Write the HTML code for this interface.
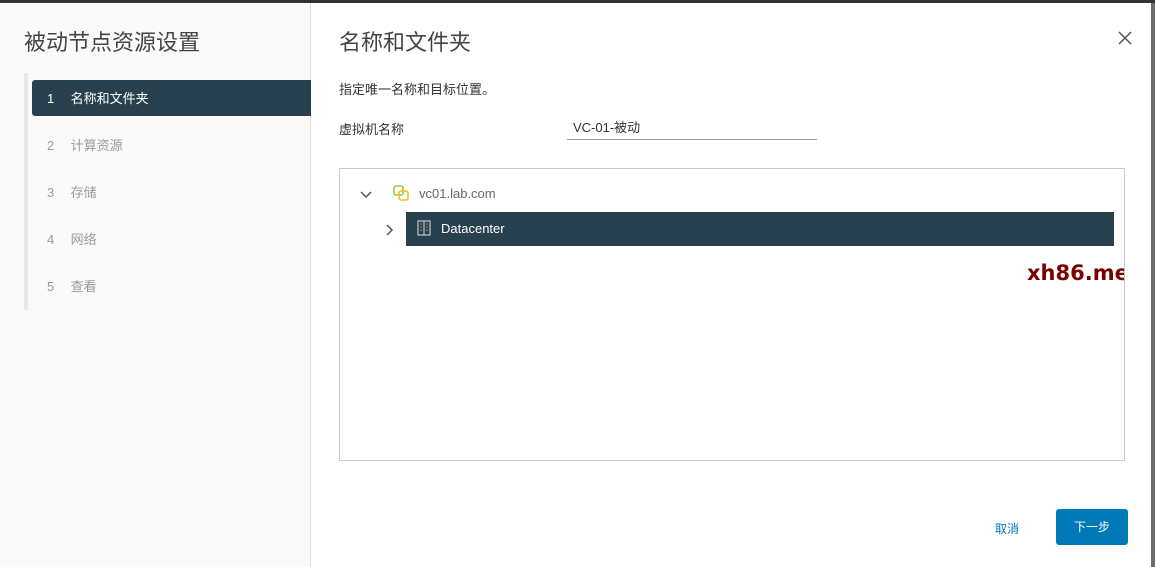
<!DOCTYPE html><html><head><meta charset="utf-8"><style>
*{margin:0;padding:0;box-sizing:border-box}
body{width:1155px;height:567px;overflow:hidden;background:#6b6b6b;font-family:"Liberation Sans","Noto Sans CJK SC",sans-serif;position:relative}
.dlg{position:absolute;left:0;top:3px;width:1151px;height:564px;background:#fff}
.side{position:absolute;left:0;top:0;width:311px;height:564px;background:#fafafa;border-right:1px solid #ddd}
.t{position:absolute;color:#333}
.step{position:absolute;left:32px;width:279px;height:36px;font-size:13px;color:#9a9a9a;padding:8px 0 0 15px}
.step b{font-weight:normal;display:inline-block;width:20px}
</style></head><body>
<div class="dlg">
<div class="side">
<div class="t" style="left:24px;top:22px;font-size:22px;color:#444">被动节点资源设置</div>
<div style="position:absolute;left:24px;top:70px;width:4px;height:237px;background:#e8e8e8"></div>
<div class="step" style="top:77px;background:#29414e;color:#fff;border-radius:3px 0 0 3px"><b>1</b> 名称和文件夹</div>
<div class="step" style="top:124px"><b>2</b> 计算资源</div>
<div class="step" style="top:171px"><b>3</b> 存储</div>
<div class="step" style="top:218px"><b>4</b> 网络</div>
<div class="step" style="top:265px"><b>5</b> 查看</div>
</div>
<div class="t" style="left:339px;top:22px;font-size:22px;color:#444">名称和文件夹</div>
<svg style="position:absolute;left:1118px;top:28px" width="14" height="14"><path d="M1 1L13 13M13 1L1 13" stroke="#555" stroke-width="1.5"/></svg>
<div class="t" style="left:339px;top:76px;font-size:13px">指定唯一名称和目标位置。</div>
<div class="t" style="left:339px;top:116px;font-size:13px">虚拟机名称</div>
<div class="t" style="left:573px;top:114px;font-size:13px">VC-01-被动</div>
<div style="position:absolute;left:567px;top:136px;width:250px;height:1px;background:#999"></div>
<div style="position:absolute;left:339px;top:165px;width:786px;height:293px;border:1px solid #ccc;overflow:hidden">
<div style="position:absolute;left:687px;top:92px;font-size:21px;font-weight:bold;color:#7a0000;font-family:'DejaVu Sans',sans-serif;white-space:nowrap">xh86.me</div>
</div>
<svg style="position:absolute;left:360px;top:188px" width="12" height="8"><path d="M1 1L6 6L11 1" stroke="#555" stroke-width="1.5" fill="none"/></svg>
<svg style="position:absolute;left:393px;top:182px" width="16" height="16"><rect x="1" y="1" width="9" height="9" rx="2" fill="none" stroke="#9bc93e" stroke-width="1.6"/><rect x="6" y="6" width="9" height="9" rx="2" fill="none" stroke="#f0c020" stroke-width="1.6"/></svg>
<div class="t" style="left:419px;top:183px;font-size:13px;color:#666">vc01.lab.com</div>
<svg style="position:absolute;left:386px;top:221px" width="8" height="12"><path d="M1 1L6 6L1 11" stroke="#555" stroke-width="1.5" fill="none"/></svg>
<div style="position:absolute;left:406px;top:209px;width:708px;height:34px;background:#29414e"></div>
<svg style="position:absolute;left:417px;top:217px" width="14" height="16"><rect x="1" y="1" width="12" height="14" fill="none" stroke="#ddd"/><path d="M7 1V15M3.5 4h1M3.5 7h1M3.5 10h1M9.5 4h1M9.5 7h1M9.5 10h1" stroke="#ddd"/></svg>
<div class="t" style="left:441px;top:218px;font-size:13px;color:#fff">Datacenter</div>
<div class="t" style="left:995px;top:517px;font-size:12px;color:#0079b8">取消</div>
<div style="position:absolute;left:1056px;top:506px;width:72px;height:36px;background:#0079b8;border-radius:3px;color:#fff;font-size:12px;text-align:center;line-height:36px">下一步</div>
</div>
<div style="position:absolute;left:0;top:0;width:1155px;height:3px;background:#333"></div>
</body></html>
